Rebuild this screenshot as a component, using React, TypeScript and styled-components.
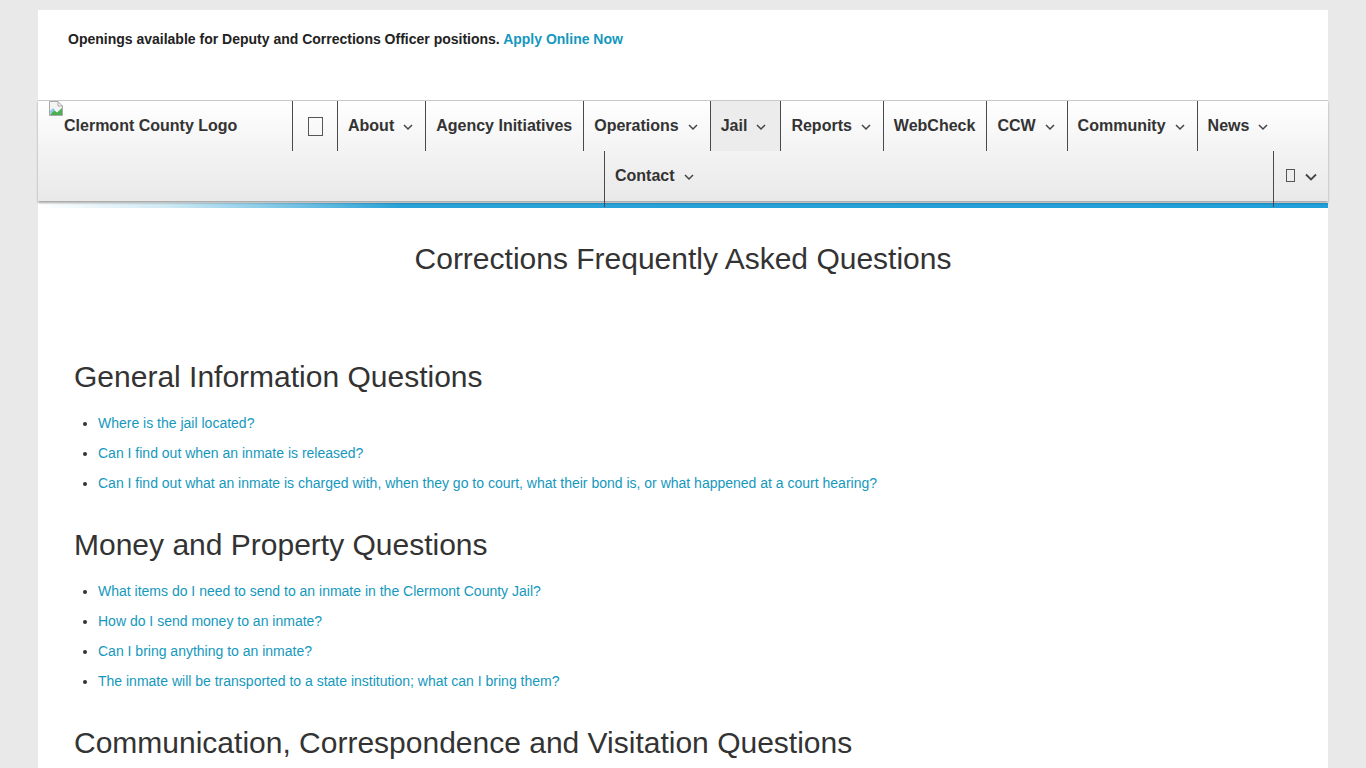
import React from "react";
import styled, { createGlobalStyle } from "styled-components";

const Global = createGlobalStyle`
  html, body { margin: 0; padding: 0; }
  body {
    background: #e9e9e9;
    font-family: "Liberation Sans", Arial, Helvetica, sans-serif;
    color: #333;
  }
`;

const Page = styled.div`
  width: 1290px;
  margin: 10px auto 0;
  background: #fff;
  min-height: 758px;
`;

const TopBar = styled.div`
  height: 90px;
  box-sizing: border-box;
  padding: 19px 30px 0;
  font-size: 14px;
  line-height: 20px;
  font-weight: bold;
  color: #222;
`;

const TopLink = styled.a`
  color: #1598bd;
  text-decoration: none;
`;

const Nav = styled.nav`
  position: relative;
  border-top: 1px solid #c9c9c9;
  background: linear-gradient(to bottom, #ffffff 0%, #f3f3f3 50%, #e9e9e9 100%);
  box-shadow: 0 2px 2px rgba(0, 0, 0, 0.35);
  font-size: 16px;
  font-weight: bold;
  color: #333;
`;

const NavRow = styled.div`
  display: flex;
  height: 50px;
`;

const Logo = styled.div`
  width: 254px;
  box-sizing: border-box;
  padding-left: 10px;
  display: flex;
  align-items: flex-start;
`;

const LogoText = styled.span`
  margin-top: 16px;
  line-height: 18px;
  color: #333;
`;

const Item = styled.div<{ $active?: boolean; $chev?: boolean; $tall?: boolean; $offset?: number }>`
  display: flex;
  align-items: center;
  height: ${(p) => (p.$tall ? "56px" : "50px")};
  box-sizing: border-box;
  padding: 0 ${(p) => (p.$active ? "14px" : p.$chev ? "12px" : "11px")} ${(p) => (p.$tall ? "6px" : "0")} 10px;
  border-left: 1px solid #4a4a4a;
  background: ${(p) => (p.$active ? "#ececec" : "transparent")};
  margin-left: ${(p) => (p.$offset !== undefined ? `${p.$offset}px` : "0")};
  position: relative;
  z-index: 1;
  white-space: nowrap;
`;

const HomeItem = styled(Item)`
  padding: 0 14px 0 15px;
`;

const SearchItem = styled(Item)`
  margin-left: auto;
  align-items: flex-start;
  padding: 18px 11px 0 12px;
`;

const Chev = styled.svg<{ $big?: boolean }>`
  width: ${(p) => (p.$big ? "12px" : "10px")};
  height: ${(p) => (p.$big ? "8px" : "6px")};
  margin-left: ${(p) => (p.$big ? "10px" : "9px")};
  margin-top: ${(p) => (p.$big ? "4px" : "2px")};
  overflow: visible;
`;

const Tofu = styled.span<{ $small?: boolean }>`
  display: inline-block;
  box-sizing: border-box;
  width: ${(p) => (p.$small ? "9px" : "15px")};
  height: ${(p) => (p.$small ? "13px" : "19px")};
  border: 1px solid #555;
`;

const BlueBar = styled.div`
  height: 5px;
  margin-top: 2px;
  background: linear-gradient(to right, #ffffff 0%, #cfeaf5 10%, #2aa2d7 28%, #209fd9 100%);
`;

const Content = styled.main`
  padding: 0 36px 40px;
`;

const Title = styled.h1`
  margin: 34px 0 85px;
  font-size: 30px;
  line-height: 33px;
  font-weight: normal;
  text-align: center;
  color: #333;
`;

const Section = styled.h2`
  margin: 35px 0 0;
  font-size: 30px;
  line-height: 33px;
  font-weight: normal;
  color: #333;
`;

const List = styled.ul`
  margin: 20px 0 0;
  padding-left: 24px;
  font-size: 14px;
  line-height: 20px;
`;

const Li = styled.li`
  margin-bottom: 10px;
  color: #333;
`;

const QLink = styled.a`
  color: #1598bd;
  text-decoration: none;
`;

const Chevron = ({ big }: { big?: boolean }) => (
  <Chev $big={big} viewBox={big ? "0 0 12 8" : "0 0 10 6"}>
    {big ? (
      <path d="M1 1.5 L6 6.5 L11 1.5" fill="none" stroke="#444" strokeWidth="1.8" />
    ) : (
      <path d="M1 1 L5 5 L9 1" fill="none" stroke="#444" strokeWidth="1.5" />
    )}
  </Chev>
);

const BrokenImg = () => (
  <svg width="16" height="16" viewBox="0 0 16 16">
    <path d="M1.5 0.5 H10 L14.5 5 V14.5 H1.5 Z" fill="#f4f4f4" stroke="#a9a9a9" />
    <path d="M10 0.5 V5 H14.5" fill="none" stroke="#a9a9a9" />
    <path d="M2 14 L6 9 L9 11.5 L14 7 V14 Z" fill="#4caf50" />
    <path d="M2 10 L5 7 L7 9 L2 13 Z" fill="#8fc9e8" />
  </svg>
);

const general = [
  "Where is the jail located?",
  "Can I find out when an inmate is released?",
  "Can I find out what an inmate is charged with, when they go to court, what their bond is, or what happened at a court hearing?",
];

const money = [
  "What items do I need to send to an inmate in the Clermont County Jail?",
  "How do I send money to an inmate?",
  "Can I bring anything to an inmate?",
  "The inmate will be transported to a state institution; what can I bring them?",
];

export default function App() {
  return (
    <>
      <Global />
      <Page>
        <TopBar>
          Openings available for Deputy and Corrections Officer positions.{" "}
          <TopLink href="#">Apply Online Now</TopLink>
        </TopBar>
        <Nav>
          <NavRow>
            <Logo>
              <BrokenImg />
              <LogoText>Clermont County Logo</LogoText>
            </Logo>
            <HomeItem>
              <Tofu />
            </HomeItem>
            <Item $chev>About<Chevron /></Item>
            <Item>Agency Initiatives</Item>
            <Item $chev>Operations<Chevron /></Item>
            <Item $chev $active>Jail<Chevron /></Item>
            <Item $chev>Reports<Chevron /></Item>
            <Item>WebCheck</Item>
            <Item $chev>CCW<Chevron /></Item>
            <Item $chev>Community<Chevron /></Item>
            <Item $chev>News<Chevron /></Item>
          </NavRow>
          <NavRow>
            <Item $chev $tall $offset={566}>Contact<Chevron /></Item>
            <SearchItem $tall>
              <Tofu $small />
              <Chevron big />
            </SearchItem>
          </NavRow>
        </Nav>
        <BlueBar />
        <Content>
          <Title>Corrections Frequently Asked Questions</Title>
          <Section>General Information Questions</Section>
          <List>
            {general.map((q) => (
              <Li key={q}><QLink href="#">{q}</QLink></Li>
            ))}
          </List>
          <Section>Money and Property Questions</Section>
          <List>
            {money.map((q) => (
              <Li key={q}><QLink href="#">{q}</QLink></Li>
            ))}
          </List>
          <Section>Communication, Correspondence and Visitation Questions</Section>
        </Content>
      </Page>
    </>
  );
}
